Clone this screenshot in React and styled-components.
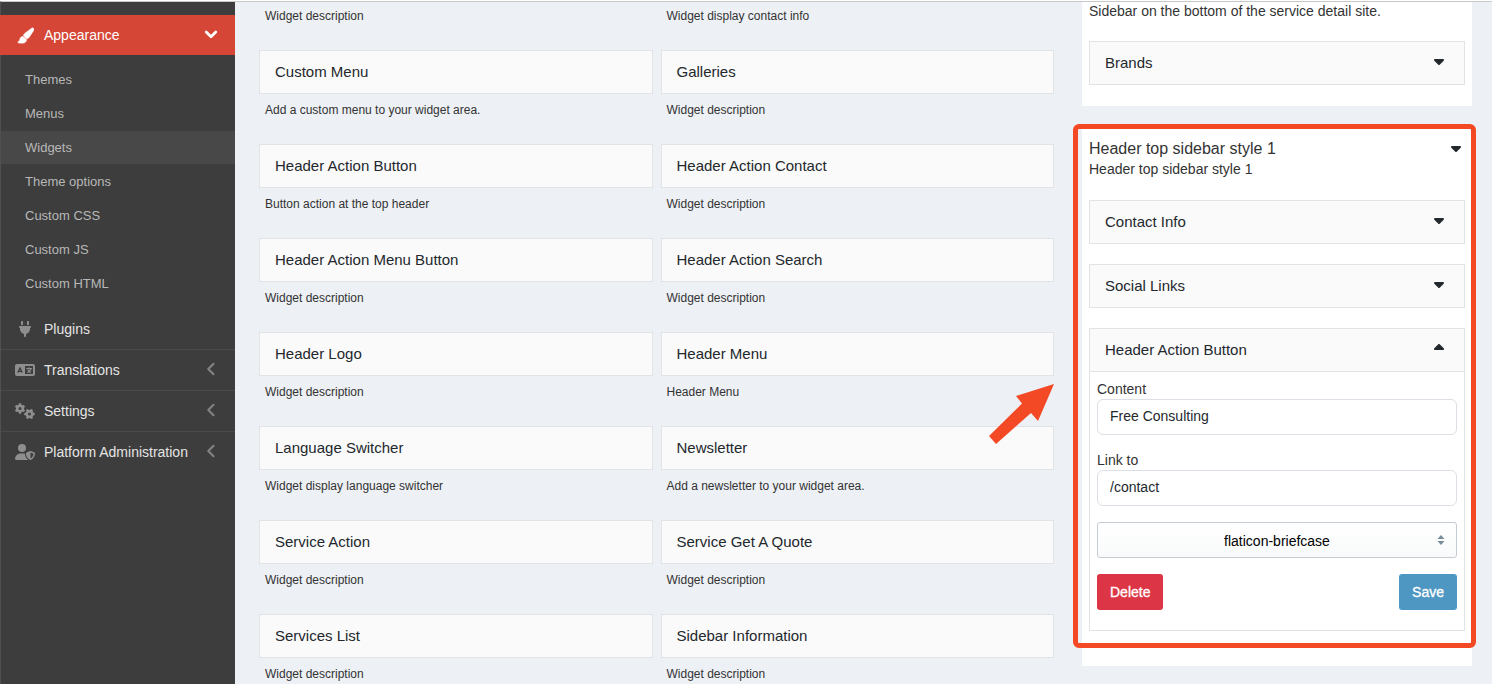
import React, { useState } from "react";
import styled, { createGlobalStyle, css } from "styled-components";
import { FaPaintbrush, FaPlug, FaLanguage, FaGears, FaUserShield, FaCaretDown, FaCaretUp } from "react-icons/fa6";

const GlobalStyle = createGlobalStyle`
  *, *::before, *::after { box-sizing: border-box; }
  body {
    margin: 0;
    background: #edf0f5;
    color: #333;
    font: 14px/20px "Liberation Sans", Arial, sans-serif;
  }
  button, input, select { font: inherit; }
  h2, p, ul { margin: 0; padding: 0; font-weight: 400; }
  ul { list-style: none; }
`;

const Page = styled.div`
  display: grid;
  grid-template-columns: 235px minmax(0, 1fr);
  min-height: 100vh;
  border-top: 1px solid #fff;
`;

const Sidebar = styled.nav`
  background: #3d3d3d;
  border-top: 1px solid #c8c8c8;
  border-left: 1px solid #505050;
  padding-top: 13px;
`;

const NavLink = styled.a`
  display: flex;
  align-items: center;
  height: 41px;
  padding: 0 17px 0 14px;
  border-bottom: 1px solid ${(p) => (p.$last ? "transparent" : "#4a4a4a")};
  color: #e4e4e4;
  text-decoration: none;
  ${(p) =>
    p.$active &&
    css`
      height: 40px;
      margin-left: -1px;
      padding-left: 15px;
      border-bottom: 0;
      background: #d64636;
      color: #fff;
    `}
`;

const NavIcon = styled.span`
  display: flex;
  justify-content: center;
  width: 20px;
  margin-right: 9px;
  color: ${(p) => (p.$active ? "#fff" : "#8e8e8e")};
`;

const NavLabel = styled.span`
  flex: 1;
  white-space: nowrap;
`;

const Chevron = styled.svg`
  width: 14px;
  height: 14px;
  margin-bottom: 3px;
  fill: none;
  stroke: ${(p) => (p.$active ? "#fff" : "#828282")};
  stroke-width: ${(p) => (p.$active ? 2.8 : 2.2)};
  stroke-linecap: round;
  stroke-linejoin: round;
`;

const SubMenu = styled.ul`
  display: grid;
  gap: 1px;
  padding: 8px 0 9px;
`;

const SubLink = styled.a`
  display: block;
  padding-left: 24px;
  font-size: 13px;
  line-height: 33px;
  color: #b8b8b8;
  background: ${(p) => (p.$current ? "#484848" : "transparent")};
  text-decoration: none;
`;

const Content = styled.main`
  display: grid;
  grid-template-columns: 53fr 26fr;
  column-gap: 28px;
  align-items: start;
  padding: 0 20px 0 24px;
  border-top: 1px solid #c8c8c8;
`;

const Available = styled.section`
  position: relative;
  display: grid;
  grid-template-columns: repeat(2, minmax(0, 1fr));
  gap: 25px 8px;
  padding-top: 5px;
`;

const boxed = css`
  height: 44px;
  border: 1px solid #e2e3e4;
  background: #fafafa;
  color: #23282d;
  font-size: 15px;
`;

const WidgetTitle = styled.div`
  ${boxed}
  margin-bottom: 7px;
  padding: 0 15px;
  line-height: 42px;
`;

const WidgetDescription = styled.p`
  padding-left: 6px;
  font-size: 12px;
  line-height: 18px;
`;

const PointerArrow = styled.svg`
  position: absolute;
  top: 382px;
  right: 0;
  width: 66px;
  height: 60px;
  fill: #f44925;
`;

const Areas = styled.section`
  display: grid;
  gap: 20px;
`;

const AreaCard = styled.section`
  position: relative;
  background: #fff;
  padding: ${(p) => (p.$continued ? "0 7px 21px" : "13px 7px 35px")};
`;

const Highlight = styled.div`
  position: absolute;
  inset: -2px -4px 18px -9px;
  border: 5px solid #f44925;
  border-radius: 6px;
  pointer-events: none;
`;

const AreaHeading = styled.div`
  display: flex;
  align-items: center;
  justify-content: space-between;
  padding-right: 1px;
`;

const AreaTitle = styled.h2`
  font-size: 16px;
  line-height: 20px;
`;

const AreaDescription = styled.p`
  margin-bottom: ${(p) => (p.$continued ? "21px" : "20px")};
  line-height: ${(p) => (p.$continued ? "18px" : "21px")};
`;

const Stack = styled.div`
  display: grid;
  gap: 20px;
`;

const PanelToggle = styled.button`
  ${boxed}
  display: flex;
  align-items: center;
  justify-content: space-between;
  width: 100%;
  padding: 0 17px 0 15px;
  text-align: left;
  cursor: pointer;

  svg { margin-bottom: 4px; }
`;

const IconButton = styled.button`
  display: flex;
  padding: 0 0 2px;
  border: 0;
  background: none;
  color: #23282d;
  cursor: pointer;
`;

const PanelForm = styled.form`
  display: grid;
  gap: 16px;
  padding: 8px 7px 20px;
  border: 1px solid #e2e3e4;
  border-top: 0;
`;

const Field = styled.label`
  display: block;
  line-height: 19px;
`;

const TextInput = styled.input`
  display: block;
  width: 100%;
  height: 36px;
  padding: 0 12px 2px;
  border: 1px solid #dcdfe5;
  border-radius: 6px;
  background: #fff;
  color: #23282d;
`;

const SelectWrap = styled.div`
  position: relative;
`;

const Select = styled.select`
  appearance: none;
  display: block;
  width: 100%;
  height: 36px;
  padding: 2px 14px 0;
  border: 1px solid #c4cdd5;
  border-radius: 3px;
  background: linear-gradient(#fff, #f9fafb);
  color: #000;
  text-align: center;
  text-align-last: center;
`;

const SortArrows = styled.svg`
  position: absolute;
  top: 13px;
  right: 12px;
  width: 8px;
  height: 10px;
  fill: #798c9c;
  pointer-events: none;
`;

const Actions = styled.div`
  display: flex;
  justify-content: space-between;
`;

const ActionButton = styled.button`
  height: 36px;
  padding: 0 12px;
  border: 1px solid transparent;
  border-radius: 3px;
  background: ${(p) => (p.$danger ? "#dc3545" : "#4e97c2")};
  background-clip: border-box;
  color: #fff;
  -webkit-text-stroke: 0.3px #fff;
  cursor: pointer;
`;

const subItems = ["Themes", "Menus", "Widgets", "Theme options", "Custom CSS", "Custom JS", "Custom HTML"];

const navItems = [
  { label: "Plugins", icon: <FaPlug size={16} /> },
  { label: "Translations", icon: <FaLanguage size={20} />, more: true },
  { label: "Settings", icon: <FaGears size={20} />, more: true },
  { label: "Platform Administration", icon: <FaUserShield size={20} />, more: true },
];

const widgets = [
  ["", "Widget description"],
  ["", "Widget display contact info"],
  ["Custom Menu", "Add a custom menu to your widget area."],
  ["Galleries", "Widget description"],
  ["Header Action Button", "Button action at the top header"],
  ["Header Action Contact", "Widget description"],
  ["Header Action Menu Button", "Widget description"],
  ["Header Action Search", "Widget description"],
  ["Header Logo", "Widget description"],
  ["Header Menu", "Header Menu"],
  ["Language Switcher", "Widget display language switcher"],
  ["Newsletter", "Add a newsletter to your widget area."],
  ["Service Action", "Widget description"],
  ["Service Get A Quote", "Widget description"],
  ["Services List", "Widget description"],
  ["Sidebar Information", "Widget description"],
];

function Panel({ title, children }) {
  const [open, setOpen] = useState(Boolean(children));
  return (
    <div>
      <PanelToggle type="button" aria-expanded={open} onClick={() => setOpen(!open)}>
        {title}
        {open ? <FaCaretUp size={16} /> : <FaCaretDown size={16} />}
      </PanelToggle>
      {open && children}
    </div>
  );
}

function ActionButtonForm() {
  return (
    <PanelForm onSubmit={(e) => e.preventDefault()}>
      <Field>
        Content
        <TextInput name="content" defaultValue="Free Consulting" />
      </Field>
      <Field>
        Link to
        <TextInput name="link" defaultValue="/contact" />
      </Field>
      <SelectWrap>
        <Select name="icon" aria-label="Icon" defaultValue="flaticon-briefcase">
          <option>flaticon-briefcase</option>
        </Select>
        <SortArrows viewBox="0 0 8 10" aria-hidden="true">
          <path d="M4 0 7.500 4h-7zM4 10 .5 6h7z" />
        </SortArrows>
      </SelectWrap>
      <Actions>
        <ActionButton type="button" $danger>Delete</ActionButton>
        <ActionButton type="submit">Save</ActionButton>
      </Actions>
    </PanelForm>
  );
}

export default function App() {
  return (
    <>
      <GlobalStyle />
      <Page>
        <Sidebar>
          <NavLink href="#appearance" $active>
            <NavIcon $active><FaPaintbrush size={17} stroke="currentColor" strokeWidth={24} /></NavIcon>
            <NavLabel>Appearance</NavLabel>
            <Chevron $active viewBox="0 0 14 14" aria-hidden="true">
              <path d="M2.200 5 7 9.700 11.800 5" />
            </Chevron>
          </NavLink>
          <SubMenu>
            {subItems.map((name) => (
              <li key={name}>
                <SubLink href="#appearance" $current={name === "Widgets"}>{name}</SubLink>
              </li>
            ))}
          </SubMenu>
          {navItems.map((item, i) => (
            <NavLink key={item.label} href="#nav" $last={i === navItems.length - 1}>
              <NavIcon>{item.icon}</NavIcon>
              <NavLabel>{item.label}</NavLabel>
              {item.more && (
                <Chevron viewBox="0 0 14 14" aria-hidden="true">
                  <path d="M9.500 1.800 4.300 7 9.500 12.200" />
                </Chevron>
              )}
            </NavLink>
          ))}
        </Sidebar>
        <Content>
          <Available>
            {widgets.map(([title, text], i) => (
              <div key={i}>
                {title && <WidgetTitle>{title}</WidgetTitle>}
                <WidgetDescription>{text}</WidgetDescription>
              </div>
            ))}
            <PointerArrow viewBox="0 0 66 60" aria-hidden="true">
              <path d="M66 0 50 37 43 29 8 60 1 52 34 19.500 28 12z" />
            </PointerArrow>
          </Available>
          <Areas>
            <AreaCard $continued>
              <AreaDescription $continued>Sidebar on the bottom of the service detail site.</AreaDescription>
              <Panel title="Brands" />
            </AreaCard>
            <AreaCard>
              <AreaHeading>
                <AreaTitle>Header top sidebar style 1</AreaTitle>
                <IconButton type="button" aria-label="Toggle sidebar area"><FaCaretDown size={16} /></IconButton>
              </AreaHeading>
              <AreaDescription>Header top sidebar style 1</AreaDescription>
              <Stack>
                <Panel title="Contact Info" />
                <Panel title="Social Links" />
                <Panel title="Header Action Button"><ActionButtonForm /></Panel>
              </Stack>
              <Highlight />
            </AreaCard>
          </Areas>
        </Content>
      </Page>
    </>
  );
}
